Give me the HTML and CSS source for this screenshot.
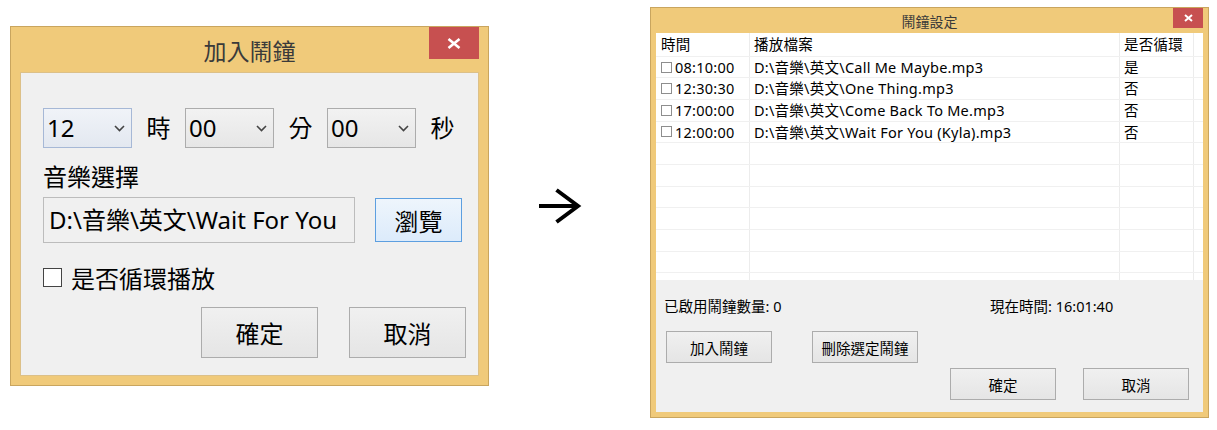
FILE: index.html
```html
<!DOCTYPE html>
<html lang="zh-Hant">
<head>
<meta charset="utf-8">
<title>鬧鐘設定</title>
<link rel="stylesheet" href="styles.css">
</head>
<body>
<section class="win win-add">
  <header class="tb tb-add">
    <span class="tb-title">加入鬧鐘</span>
    <button class="close close-lg" aria-label="關閉">
      <svg width="14" height="11" viewBox="0 0 14 11"><path d="M1.5 1 L12.5 10 M12.5 1 L1.5 10" stroke="#fff" stroke-width="2.6" fill="none"/></svg>
    </button>
  </header>
  <div class="client client-add">
    <div class="row-time">
      <div class="sel sel-focus"><span>12</span><svg class="chev" width="11" height="7" viewBox="0 0 11 7"><path d="M1 1 L5.5 5.5 L10 1" stroke="#444" stroke-width="1.6" fill="none"/></svg></div>
      <span class="unit">時</span>
      <div class="sel"><span>00</span><svg class="chev" width="11" height="7" viewBox="0 0 11 7"><path d="M1 1 L5.5 5.5 L10 1" stroke="#444" stroke-width="1.6" fill="none"/></svg></div>
      <span class="unit">分</span>
      <div class="sel"><span>00</span><svg class="chev" width="11" height="7" viewBox="0 0 11 7"><path d="M1 1 L5.5 5.5 L10 1" stroke="#444" stroke-width="1.6" fill="none"/></svg></div>
      <span class="unit">秒</span>
    </div>
    <div class="lbl">音樂選擇</div>
    <div class="row-file">
      <div class="path">D:\音樂\英文\Wait For You</div>
      <button class="btn btn-browse">瀏覽</button>
    </div>
    <div class="chk-row"><span class="chk chk-lg"></span><span>是否循環播放</span></div>
    <div class="row-actions">
      <button class="btn btn-lg">確定</button>
      <button class="btn btn-lg">取消</button>
    </div>
  </div>
</section>

<svg class="arrow" width="52" height="47" viewBox="0 0 52 47">
  <path d="M4 23 H42" stroke="#000" stroke-width="4" fill="none"/>
  <path d="M21.5 7 L43 23 L21.5 39" stroke="#000" stroke-width="4" fill="none" stroke-linejoin="miter"/>
</svg>

<section class="win win-set">
  <header class="tb tb-set">
    <span class="tb-title">鬧鐘設定</span>
    <button class="close close-sm" aria-label="關閉">
      <svg width="9" height="8" viewBox="0 0 9 8"><path d="M1 1 L8 7 M8 1 L1 7" stroke="#fff" stroke-width="2" fill="none"/></svg>
    </button>
  </header>
  <div class="client client-set">
    <div class="list">
      <div class="lrow lhead"><div class="c c1">時間</div><div class="c c2">播放檔案</div><div class="c c3">是否循環</div><div class="c c4"></div></div>
      <div class="lrow"><div class="c c1"><span class="chk chk-sm"></span>08:10:00</div><div class="c c2">D:\音樂\英文\Call Me Maybe.mp3</div><div class="c c3">是</div><div class="c c4"></div></div>
      <div class="lrow"><div class="c c1"><span class="chk chk-sm"></span>12:30:30</div><div class="c c2">D:\音樂\英文\One Thing.mp3</div><div class="c c3">否</div><div class="c c4"></div></div>
      <div class="lrow"><div class="c c1"><span class="chk chk-sm"></span>17:00:00</div><div class="c c2">D:\音樂\英文\Come Back To Me.mp3</div><div class="c c3">否</div><div class="c c4"></div></div>
      <div class="lrow"><div class="c c1"><span class="chk chk-sm"></span>12:00:00</div><div class="c c2">D:\音樂\英文\Wait For You (Kyla).mp3</div><div class="c c3">否</div><div class="c c4"></div></div>
      <div class="lrow"><div class="c c1"></div><div class="c c2"></div><div class="c c3"></div><div class="c c4"></div></div>
      <div class="lrow"><div class="c c1"></div><div class="c c2"></div><div class="c c3"></div><div class="c c4"></div></div>
      <div class="lrow"><div class="c c1"></div><div class="c c2"></div><div class="c c3"></div><div class="c c4"></div></div>
      <div class="lrow"><div class="c c1"></div><div class="c c2"></div><div class="c c3"></div><div class="c c4"></div></div>
      <div class="lrow"><div class="c c1"></div><div class="c c2"></div><div class="c c3"></div><div class="c c4"></div></div>
      <div class="lrow"><div class="c c1"></div><div class="c c2"></div><div class="c c3"></div><div class="c c4"></div></div>
      <div class="lrow"><div class="c c1"></div><div class="c c2"></div><div class="c c3"></div><div class="c c4"></div></div>
    </div>
    <div class="panel">
      <div class="info">
        <span class="info-count">已啟用鬧鐘數量: 0</span>
        <span class="info-now">現在時間: 16:01:40</span>
      </div>
      <div class="row-manage">
        <button class="btn btn-sm">加入鬧鐘</button>
        <button class="btn btn-sm">刪除選定鬧鐘</button>
      </div>
      <div class="row-ok">
        <button class="btn btn-sm">確定</button>
        <button class="btn btn-sm">取消</button>
      </div>
    </div>
  </div>
</section>
</body>
</html>
```

FILE: styles.css
```css
* { box-sizing: border-box; }

html, body {
  margin: 0;
  padding: 0;
  background: #ffffff;
}

body {
  position: relative;
  width: 1217px;
  height: 430px;
  overflow: hidden;
  font-family: "Noto Sans", "Noto Sans CJK TC", sans-serif;
  color: #000;
}

button {
  font-family: inherit;
  color: #000;
  cursor: default;
}

/* windows on the desktop */
.win {
  position: absolute;
  display: flex;
  flex-direction: column;
  background: #f0ca7a;
  border: 1px solid #c9a55e;
}

.win-add {
  left: 10px;
  top: 26px;
  width: 479px;
  height: 360px;
  padding: 0 9px 9px;
}

.win-set {
  left: 650px;
  top: 7px;
  width: 559px;
  height: 411px;
  padding: 0 5px 5px;
}

.tb {
  flex: none;
  display: flex;
  align-items: center;
  justify-content: center;
  color: #3a3a3a;
}

.tb-add {
  height: 45px;
  font-size: 23px;
}

.tb-set {
  height: 25px;
  font-size: 14px;
}

.close {
  position: absolute;
  top: 0;
  display: flex;
  align-items: center;
  justify-content: center;
  padding: 0;
  border: 0;
  background: #c75050;
}

.close-lg {
  right: 9px;
  width: 50px;
  height: 32px;
}

.close-sm {
  right: 5px;
  width: 30px;
  height: 20px;
}

.client {
  flex: 1;
  background: #f0f0f0;
}

/* ---------- add-alarm dialog ---------- */
.client-add {
  border: 1px solid #dcc088;
  padding: 35px 0 0 22px;
  font-size: 24px;
}

.row-time {
  display: flex;
  align-items: center;
  height: 40px;
}

.sel {
  width: 89px;
  height: 40px;
  display: flex;
  align-items: center;
  justify-content: space-between;
  padding: 0 6px 0 3px;
  border: 1px solid #acacac;
  background: linear-gradient(#f2f2f2, #e6e6e6);
  line-height: 1;
}

.sel-focus {
  border-color: #a6b8d6;
  background: linear-gradient(#f0f3f8, #e3e8f0);
}

.unit {
  width: 53px;
  text-align: center;
  line-height: 1;
}

.lbl {
  margin-top: 14px;
  line-height: 30px;
}

.row-file {
  margin-top: 5px;
  display: flex;
  align-items: center;
  height: 46px;
}

.path {
  width: 312px;
  height: 46px;
  padding-left: 5px;
  border: 1px solid #bcbcbc;
  background: #f0f0f0;
  line-height: 43px;
  white-space: nowrap;
  overflow: hidden;
}

.btn {
  display: flex;
  align-items: center;
  justify-content: center;
  padding: 0;
  border: 1px solid #acacac;
  background: linear-gradient(#f0f0f0, #e5e5e5);
}

.btn-browse {
  margin-left: 20px;
  width: 87px;
  height: 44px;
  font-size: 24px;
  border-color: #5d9fe0;
  background: linear-gradient(#eef5fc, #dcebfb);
}

.chk-row {
  margin-top: 19px;
  height: 30px;
  display: flex;
  align-items: center;
  gap: 9px;
}

.chk {
  display: inline-block;
  flex: none;
  background: #fff;
}

.chk-lg {
  width: 19px;
  height: 19px;
  border: 1px solid #444;
}

.row-actions {
  margin-top: 15px;
  display: flex;
  justify-content: flex-end;
  gap: 31px;
  padding-right: 12px;
}

.btn-lg {
  width: 117px;
  height: 51px;
  font-size: 24px;
}

/* arrow between the windows */
.arrow {
  position: absolute;
  left: 535px;
  top: 183px;
}

/* ---------- alarm list dialog ---------- */
.client-set {
  display: flex;
  flex-direction: column;
  font-size: 14.5px;
}

.list {
  height: 247px;
  flex: none;
  background: #fff;
  overflow: hidden;
}

.lrow {
  display: grid;
  grid-template-columns: 94px 370px 74px 9px;
  height: 21.67px;
  border-bottom: 1px solid #f0f0f0;
}

.lhead {
  height: 23.7px;
  border-bottom-color: #f0f0f0;
}

.c {
  display: flex;
  align-items: center;
  padding-left: 4px;
  border-right: 1px solid #ececec;
  white-space: nowrap;
  overflow: hidden;
  line-height: 1;
  letter-spacing: 0.25px;
}

.c1 { padding-left: 5px; }
.c4 { border-right: 0; }

.chk-sm {
  width: 11px;
  height: 11px;
  margin-right: 3px;
  border: 1px solid #8e8e8e;
}

.panel {
  flex: 1;
  padding: 16px 14px 0 8px;
}

.info {
  display: flex;
  line-height: 20px;
}

.info-count {
  width: 326px;
}

.row-manage {
  margin-top: 15px;
  display: flex;
  gap: 40px;
  padding-left: 2px;
}

.row-ok {
  margin-top: 5px;
  display: flex;
  justify-content: flex-end;
  gap: 27px;
}

.btn-sm {
  width: 106px;
  height: 32px;
  font-size: 14.5px;
}
```
